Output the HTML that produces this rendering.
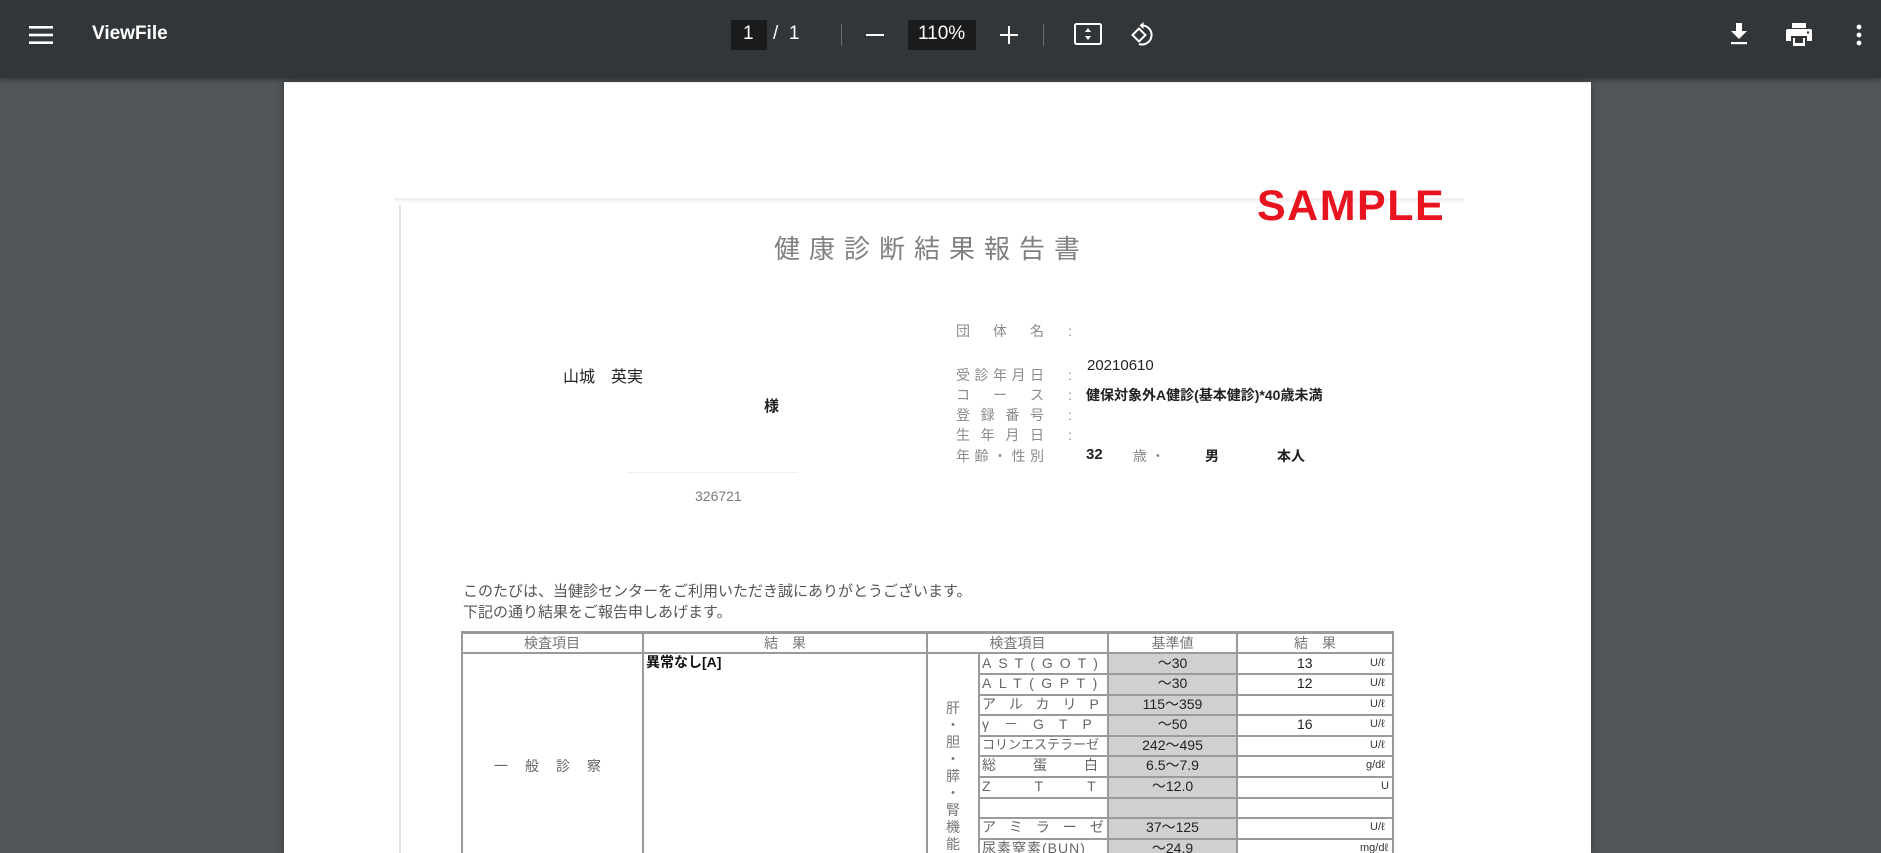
<!DOCTYPE html>
<html style="width:1881px;height:853px;overflow:hidden"><head><meta charset="utf-8">
<style>
*{margin:0;padding:0;box-sizing:border-box}
body{width:1881px;height:853px;overflow:hidden;background:#525659;position:relative;font-family:"Liberation Sans","Noto Sans CJK JP",sans-serif}
.a{position:absolute;white-space:nowrap}
#tb{position:absolute;left:0;top:0;width:1881px;height:78px;background:#323639;box-shadow:0 2px 5px rgba(0,0,0,.35);z-index:2}
.w{color:#fff}
#page{position:absolute;left:284px;top:82px;width:1307px;height:771px;background:#fff;box-shadow:0 0 8px rgba(0,0,0,.35)}
.g{color:#7a7a7a}
.lb{font-size:14px;color:#8a8a8a;line-height:18px}
.lb span{display:inline-block;width:88px;text-align:justify;text-align-last:justify}
.lb i{font-style:normal;position:absolute;left:112px;top:0}
.k{color:#222}
.t div{position:absolute}
.hl{background:#9a9a9a;height:2px}
.vl{background:#9a9a9a;width:2px}
.cell{font-size:14px;color:#666;line-height:20px;white-space:nowrap}
</style></head><body>
<div id="tb">
 <svg class="a" style="left:29px;top:26px" width="24" height="18" viewBox="0 0 24 18"><rect y="0" width="24" height="2.6" fill="#fff"/><rect y="7.7" width="24" height="2.6" fill="#fff"/><rect y="15.4" width="24" height="2.6" fill="#fff"/></svg>
 <div class="a w" style="left:92px;top:23px;font-size:19px;font-weight:bold">ViewFile</div>
 <div class="a" style="left:731px;top:20px;width:36px;height:30px;background:#191b1c"></div>
 <div class="a w" style="left:743px;top:23px;font-size:19px">1</div>
 <div class="a w" style="left:773px;top:23px;font-size:19px">/&nbsp;&nbsp;1</div>
 <div class="a" style="left:841px;top:24px;width:1px;height:22px;background:#6b6e70"></div>
 <div class="a" style="left:866px;top:34px;width:18px;height:2px;background:#fff"></div>
 <div class="a" style="left:908px;top:20px;width:68px;height:30px;background:#191b1c"></div>
 <div class="a w" style="left:918px;top:23px;font-size:19px">110%</div>
 <div class="a" style="left:1000px;top:34px;width:18px;height:2px;background:#fff"></div>
 <div class="a" style="left:1008px;top:26px;width:2px;height:18px;background:#fff"></div>
 <div class="a" style="left:1043px;top:24px;width:1px;height:22px;background:#6b6e70"></div>
 <svg class="a" style="left:1074px;top:23px" width="28" height="22" viewBox="0 0 28 22"><rect x="1" y="1" width="26" height="20" rx="1.5" fill="none" stroke="#fff" stroke-width="2"/><path d="M14 5l-3 4h6zM14 17l-3-4h6z" fill="#fff"/></svg>
 <svg class="a" style="left:1128px;top:21px" width="28" height="28" viewBox="0 0 28 28"><path d="M11 7.5l-6.5 6.5 6.5 6.5 6.5-6.5z" fill="none" stroke="#fff" stroke-width="2"/><path d="M14 4.5a9.5 9.5 0 1 1-3 18.5" fill="none" stroke="#fff" stroke-width="2"/><path d="M15.5 1v7l-4-3.5z" fill="#fff"/></svg>
 <svg class="a" style="left:1729px;top:23px" width="20" height="22" viewBox="0 0 20 22"><path d="M7 0h6v8h5l-8 8-8-8h5z" fill="#fff"/><rect x="2" y="19" width="16" height="2.2" fill="#fff"/></svg>
 <svg class="a" style="left:1786px;top:23px" width="26" height="24" viewBox="0 0 26 24"><rect x="6" y="0" width="14" height="5" fill="#fff"/><path d="M0 8a2 2 0 0 1 2-2h22a2 2 0 0 1 2 2v10h-5v-5H5v5H0z" fill="#fff"/><rect x="7" y="15" width="12" height="8" fill="#fff"/><rect x="9" y="15" width="8" height="5" fill="#323639"/><circle cx="22" cy="9.5" r="1.2" fill="#323639"/></svg>
 <svg class="a" style="left:1856px;top:24px" width="6" height="22" viewBox="0 0 6 22"><circle cx="3" cy="3" r="2.4" fill="#fff"/><circle cx="3" cy="11" r="2.4" fill="#fff"/><circle cx="3" cy="19" r="2.4" fill="#fff"/></svg>
</div>

<div id="page"></div>
<div class="a" style="left:394px;top:198px;width:1070px;height:6px;background:linear-gradient(#eee,#fff)"></div>
<div class="a" style="left:399px;top:205px;width:2px;height:648px;background:#e2e2e2"></div>
<div class="a" style="left:1257px;top:182px;font-size:43px;font-weight:bold;color:#e8141f;letter-spacing:1.5px">SAMPLE</div>
<div class="a g" style="left:774px;top:229px;font-size:26px;letter-spacing:9px;color:#808080">健康診断結果報告書</div>

<div class="a lb" style="left:956px;top:322px"><span>団 体 名</span><i>:</i></div>
<div class="a lb" style="left:956px;top:366px"><span>受 診 年 月 日</span><i>:</i></div>
<div class="a lb" style="left:956px;top:386px"><span>コ ー ス</span><i>:</i></div>
<div class="a lb" style="left:956px;top:406px"><span>登 録 番 号</span><i>:</i></div>
<div class="a lb" style="left:956px;top:426px"><span>生 年 月 日</span><i>:</i></div>
<div class="a lb" style="left:956px;top:447px"><span>年 齢 ・ 性 別</span></div>
<div class="a k" style="left:1087px;top:357px;font-size:15px">20210610</div>
<div class="a k" style="left:1086px;top:385px;font-size:14px;font-weight:bold">健保対象外A健診(基本健診)*40歳未満</div>
<div class="a k" style="left:1086px;top:446px;font-size:15px;font-weight:bold">32</div>
<div class="a lb" style="left:1133px;top:447px">歳 ・</div>
<div class="a k" style="left:1205px;top:446px;font-size:14px;font-weight:bold">男</div>
<div class="a k" style="left:1277px;top:446px;font-size:14px;font-weight:bold">本人</div>

<div class="a k" style="left:563px;top:363px;font-size:16px">山城　英実</div>
<div class="a k" style="left:764px;top:395px;font-size:15px;font-weight:bold">様</div>
<div class="a" style="left:628px;top:472px;width:170px;height:1px;background:#eee"></div>
<div class="a g" style="left:695px;top:488px;font-size:14px">326721</div>

<div class="a" style="left:463px;top:580px;font-size:15px;color:#555">このたびは、当健診センターをご利用いただき誠にありがとうございます。</div>
<div class="a" style="left:463px;top:601px;font-size:15px;color:#555">下記の通り結果をご報告申しあげます。</div>

<div class="t">
 <div style="left:1108px;top:653px;width:129px;height:200px;background:#d0d0d0"></div>
 <div class="hl" style="left:461px;top:631px;width:933px;height:3px"></div>
 <div class="hl" style="left:461px;top:652px;width:933px"></div>
 <div class="vl" style="left:461px;top:631px;height:222px"></div>
 <div class="vl" style="left:642px;top:631px;height:222px"></div>
 <div class="vl" style="left:926px;top:631px;height:222px"></div>
 <div class="vl" style="left:978px;top:653px;height:200px"></div>
 <div class="vl" style="left:1107px;top:631px;height:222px"></div>
 <div class="vl" style="left:1236px;top:631px;height:222px"></div>
 <div class="vl" style="left:1392px;top:631px;height:222px"></div>
 <div class="hl" style="left:979px;top:673px;width:414px"></div>
 <div class="hl" style="left:979px;top:694px;width:414px"></div>
 <div class="hl" style="left:979px;top:714px;width:414px"></div>
 <div class="hl" style="left:979px;top:735px;width:414px"></div>
 <div class="hl" style="left:979px;top:755px;width:414px"></div>
 <div class="hl" style="left:979px;top:776px;width:414px"></div>
 <div class="hl" style="left:979px;top:797px;width:414px"></div>
 <div class="hl" style="left:979px;top:817px;width:414px"></div>
 <div class="hl" style="left:979px;top:838px;width:414px"></div>
 <div class="cell" style="left:462px;top:633px;width:180px;text-align:center;color:#777">検査項目</div>
 <div class="cell" style="left:643px;top:633px;width:284px;text-align:center;color:#777">結　果</div>
 <div class="cell" style="left:927px;top:633px;width:181px;text-align:center;color:#777">検査項目</div>
 <div class="cell" style="left:1108px;top:633px;width:129px;text-align:center;color:#777">基準値</div>
 <div class="cell" style="left:1237px;top:633px;width:156px;text-align:center;color:#777">結　果</div>
 <div class="cell" style="left:494px;top:756px;color:#666;letter-spacing:17px">一般診察</div>
 <div class="cell" style="left:646px;top:652px;color:#111;font-weight:bold">異常なし[A]</div>
 <div class="cell" style="left:944px;top:700px;width:18px;line-height:17px;white-space:normal;color:#777;text-align:center">肝<br>・<br>胆<br>・<br>膵<br>・<br>腎<br>機<br>能</div>
 <div class="cell" style="left:982px;top:653px;letter-spacing:7px">AST(GOT)</div>
 <div class="cell" style="left:982px;top:673px;letter-spacing:7.5px">ALT(GPT)</div>
 <div class="cell" style="left:982px;top:694px;letter-spacing:13px">アルカリP</div>
 <div class="cell" style="left:982px;top:714px;letter-spacing:15px">γ－GTP</div>
 <div class="cell" style="left:982px;top:735px;font-size:13px">コリンエステラーゼ</div>
 <div class="cell" style="left:982px;top:755px;letter-spacing:37px">総蛋白</div>
 <div class="cell" style="left:982px;top:776px;letter-spacing:44px">ZTT</div>
 <div class="cell" style="left:982px;top:817px;letter-spacing:13px">アミラーゼ</div>
 <div class="cell" style="left:982px;top:838px;letter-spacing:1px">尿素窒素(BUN)</div>
 <div class="cell" style="left:1108px;top:653px;width:129px;text-align:center;color:#222">～30</div>
 <div class="cell" style="left:1108px;top:673px;width:129px;text-align:center;color:#222">～30</div>
 <div class="cell" style="left:1108px;top:694px;width:129px;text-align:center;color:#222">115～359</div>
 <div class="cell" style="left:1108px;top:714px;width:129px;text-align:center;color:#222">～50</div>
 <div class="cell" style="left:1108px;top:735px;width:129px;text-align:center;color:#222">242～495</div>
 <div class="cell" style="left:1108px;top:755px;width:129px;text-align:center;color:#222">6.5～7.9</div>
 <div class="cell" style="left:1108px;top:776px;width:129px;text-align:center;color:#222">～12.0</div>
 <div class="cell" style="left:1108px;top:817px;width:129px;text-align:center;color:#222">37～125</div>
 <div class="cell" style="left:1108px;top:838px;width:129px;text-align:center;color:#222">～24.9</div>
 <div class="cell" style="left:1297px;top:653px;color:#222">13</div>
 <div class="cell" style="left:1297px;top:673px;color:#222">12</div>
 <div class="cell" style="left:1297px;top:714px;color:#222">16</div>
 <div class="cell" style="left:1370px;top:653px;font-size:11px;color:#333">U/ℓ</div>
 <div class="cell" style="left:1370px;top:673px;font-size:11px;color:#333">U/ℓ</div>
 <div class="cell" style="left:1370px;top:694px;font-size:11px;color:#333">U/ℓ</div>
 <div class="cell" style="left:1370px;top:714px;font-size:11px;color:#333">U/ℓ</div>
 <div class="cell" style="left:1370px;top:735px;font-size:11px;color:#333">U/ℓ</div>
 <div class="cell" style="left:1366px;top:755px;font-size:11px;color:#333">g/dℓ</div>
 <div class="cell" style="left:1381px;top:776px;font-size:11px;color:#333">U</div>
 <div class="cell" style="left:1370px;top:817px;font-size:11px;color:#333">U/ℓ</div>
 <div class="cell" style="left:1360px;top:838px;font-size:11px;color:#333">mg/dℓ</div>
</div>
</body></html>
